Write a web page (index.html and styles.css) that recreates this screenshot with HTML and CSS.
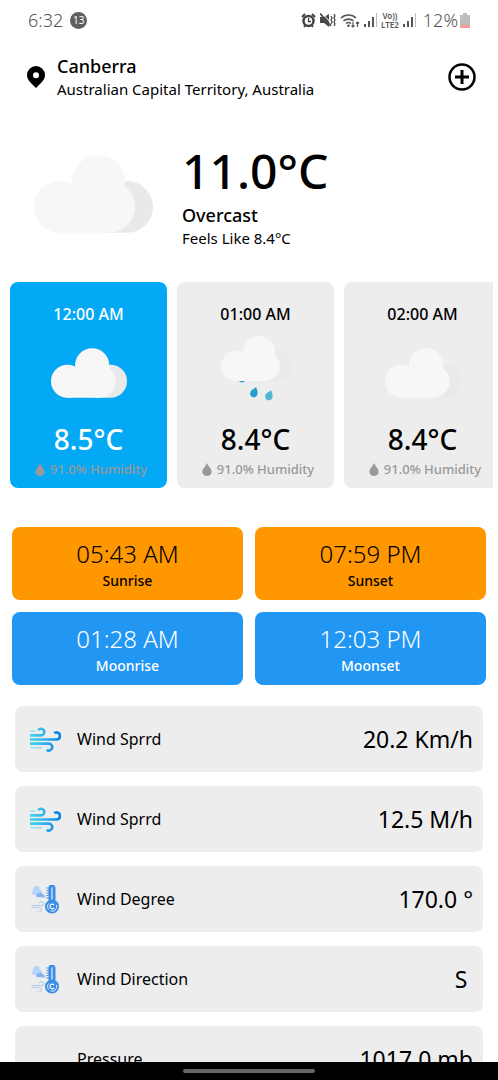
FILE: index.html
```html
<!DOCTYPE html>
<html lang="en">
<head>
<meta charset="utf-8">
<meta name="viewport" content="width=device-width, initial-scale=1">
<title>Canberra weather</title>
<link rel="stylesheet" href="styles.css">
</head>
<body>
<svg class="defs" aria-hidden="true">
  <defs>
    <linearGradient id="wind-fill" gradientUnits="userSpaceOnUse" x1="0" y1="0" x2="30" y2="0">
      <stop offset="0" stop-color="#3fd6e8"/>
      <stop offset="0.5" stop-color="#2fb0ee"/>
      <stop offset="1" stop-color="#0a78ea"/>
    </linearGradient>
    <symbol id="cloud" viewBox="0 0 120 78">
      <path class="cloud-back" d="M70 78h24a26 26 0 0 0 0-52H70z"/>
      <g class="cloud-front">
        <circle cx="26" cy="52" r="26"/>
        <circle cx="65" cy="27" r="27"/>
        <circle cx="76" cy="52" r="26"/>
        <path d="M26 34h50v44H26z"/>
      </g>
    </symbol>
    <symbol id="drop" viewBox="0 0 10 14">
      <path fill="currentColor" d="M5 0C6 3 10 6 10 9.300A5 4.700 0 0 1 0 9.300C0 6 4 3 5 0z"/>
    </symbol>
    <symbol id="wind" viewBox="0 0 30 26">
      <g fill="none" stroke="url(#wind-fill)" stroke-width="2.600">
        <path opacity="0.350" stroke-width="2" d="M0 5h5M0 21h12"/>
        <path d="M0 9h10.500a3.200 3.200 0 1 0-2.500-5"/>
        <path d="M0 13h25.500a3.400 3.400 0 1 0-2-6"/>
        <path d="M0 17h17.500a3.400 3.400 0 1 1-1.500 6"/>
      </g>
    </symbol>
    <symbol id="thermo" viewBox="0 0 28 29">
      <g fill="#b5d5f8">
        <circle cx="5" cy="4.500" r="3.500"/><circle cx="3" cy="7.500" r="2.500"/><circle cx="7" cy="7" r="3"/>
      </g>
      <path fill="#82b5f1" d="M5 12a2.500 2.500 0 0 1 1.500-3.500a3 3 0 0 1 5 1a2.500 2.500 0 0 1 2 3z"/>
      <g fill="none" stroke="#a9c9ee" stroke-width="1">
        <path d="M0 20.500h10a2 2 0 1 0-2-2M0 22.500h8a2.200 2.200 0 1 1-2 3.500"/>
      </g>
      <path stroke="#3b8ee3" stroke-width="1" d="M15 3h3M15 5.500h3M15 8h3M15 10.500h3M15 13h3"/>
      <path fill="#3b8ee3" d="M17 3a3.500 3.500 0 0 1 7 0v12.500a7 7 0 1 1-7 0z"/>
      <path stroke="#e6f1fc" stroke-width="1.200" fill="none" d="M20.500 2.500v12"/>
      <path fill="none" stroke="#dcecfb" stroke-width="1" d="M17 18.500a4.700 4.700 0 0 0 0 6M19 26a4.700 4.700 0 0 0 6-6"/>
      <path fill="none" stroke="#fff" stroke-width="1.200" d="M22.500 20a2.300 2.300 0 1 0 0 3"/>
    </symbol>
    <symbol id="signal" viewBox="0 0 13 14">
      <path fill="#555" d="M0 11h2v3H0zM4 8h2v6H4zM8 4h2v10H8z"/>
      <path fill="#bbb" d="M12 0h1v14h-1z"/>
    </symbol>
  </defs>
</svg>

<div class="app">
  <header class="status">
    <span class="clock">6:32</span>
    <span class="notice-count">13</span>
    <div class="status-icons">
      <svg width="15" height="15" viewBox="0 0 15 15" role="img" aria-label="Alarm">
        <circle cx="7.500" cy="8" r="5" fill="none" stroke="#444" stroke-width="2.500"/>
        <path fill="none" stroke="#444" stroke-width="2" d="M1 4l3-3M14 4l-3-3M3 14l1.500-2M12 14l-1.500-2"/>
        <path fill="none" stroke="#444" stroke-width="1.300" d="M7.500 5v3.500H10"/>
      </svg>
      <svg width="16" height="15" viewBox="0 0 16 15" role="img" aria-label="Vibrate">
        <path fill="#4a4a4a" d="M0 4h4L9 1v13l-5-4H0z"/>
        <path stroke="#fff" stroke-width="1" d="M2 0l9 10"/>
        <path stroke="#4a4a4a" stroke-width="1.800" d="M0 0.500l11 12.500"/>
        <path fill="none" stroke="#4a4a4a" stroke-width="1.300" d="M11 3l1 2-1 2 1 2-1 2M14 1l1 2-1 2 1 2-1 2 1 2-1 2"/>
      </svg>
      <svg width="20" height="15" viewBox="0 0 20 15" role="img" aria-label="Wi-Fi">
        <g fill="none" stroke="#555" stroke-width="1.600">
          <path d="M1 5a11 11 0 0 1 15 0M3.500 8a7.500 7.500 0 0 1 10 0M6 10.500a4 4 0 0 1 5 0"/>
        </g>
        <circle cx="8.500" cy="12.700" r="1.300" fill="#555"/>
        <path fill="none" stroke="#555" stroke-width="1.200" d="M13 9v5M11.500 12.500L13 14l1.500-1.500M17.500 14V9M16 10.500L17.500 9l1.500 1.500"/>
      </svg>
      <svg width="13" height="14"><use href="#signal"/></svg>
      <span class="network"><span>Vo))</span><span>LTE2</span></span>
      <svg width="13" height="14"><use href="#signal"/></svg>
    </div>
    <span class="percent">12%</span>
    <svg width="10" height="15" viewBox="0 0 10 15" role="img" aria-label="Battery low">
      <path fill="#bdbdbd" d="M3 0h4v2h3v13H0V2h3z"/>
      <path fill="#f4a090" d="M0 12h10v3H0z"/>
    </svg>
  </header>

  <main class="content">
    <section class="place">
      <svg class="pin" width="18" height="22" viewBox="0 0 18 22" aria-hidden="true">
        <path fill-rule="evenodd" d="M9 0a9 9 0 0 1 9 9c0 5-4 8-9 13C4 17 0 14 0 9a9 9 0 0 1 9-9zm0 6.200a3 3 0 1 0 0 6 3 3 0 0 0 0-6z"/>
      </svg>
      <div class="place-text">
        <h1 class="city">Canberra</h1>
        <p class="region">Australian Capital Territory, Australia</p>
      </div>
      <button class="add" type="button" aria-label="Add location">
        <svg width="28" height="28" viewBox="0 0 28 28" fill="none" stroke="#000">
          <circle cx="14" cy="14" r="12.500" stroke-width="2.500"/>
          <path stroke-width="3" d="M14 7v14M7 14h14"/>
        </svg>
      </button>
    </section>

    <section class="current">
      <svg class="current-icon" role="img" aria-label="Overcast"><use href="#cloud"/></svg>
      <div>
        <p class="temp">11.0°C</p>
        <p class="condition">Overcast</p>
        <p class="feels">Feels Like 8.4°C</p>
      </div>
    </section>

    <ul class="hours">
      <li class="hour hour-active">
        <span class="hour-time">12:00 AM</span>
        <div class="hour-icon"><svg class="hour-cloud"><use href="#cloud"/></svg></div>
        <span class="hour-temp">8.5°C</span>
        <span class="humidity"><svg width="10" height="13"><use href="#drop"/></svg>91.0% Humidity</span>
      </li>
      <li class="hour">
        <span class="hour-time">01:00 AM</span>
        <div class="hour-icon">
          <svg width="70" height="74" viewBox="0 0 70 74">
            <path fill="#eaeaea" d="M40 45h15a15 15 0 0 0 0-30H40z"/>
            <path fill="#2b9fc9" d="M17 44h8q-4 5-8 0z"/>
            <g fill="#f7f7f7">
              <circle cx="15" cy="30" r="15"/>
              <circle cx="38" cy="16" r="16"/>
              <circle cx="44" cy="30" r="15"/>
              <path d="M15 20h29v25H15z"/>
            </g>
            <path fill="#229fcb" d="M35 51c1 3 2 4 1.500 7a3.700 3.700 0 1 1-7-2c1-3 4-3 5.500-5z"/>
            <path fill="#55b4d4" d="M50 54c1 3 2 4 1.500 7a3.700 3.700 0 1 1-7-2c1-3 4-3 5.500-5z"/>
          </svg>
        </div>
        <span class="hour-temp">8.4°C</span>
        <span class="humidity"><svg width="10" height="13"><use href="#drop"/></svg>91.0% Humidity</span>
      </li>
      <li class="hour">
        <span class="hour-time">02:00 AM</span>
        <div class="hour-icon"><svg class="hour-cloud"><use href="#cloud"/></svg></div>
        <span class="hour-temp">8.4°C</span>
        <span class="humidity"><svg width="10" height="13"><use href="#drop"/></svg>91.0% Humidity</span>
      </li>
    </ul>

    <section class="astro">
      <div class="tile sun"><span class="tile-time">05:43 AM</span><span class="tile-name">Sunrise</span></div>
      <div class="tile sun"><span class="tile-time">07:59 PM</span><span class="tile-name">Sunset</span></div>
      <div class="tile moon"><span class="tile-time">01:28 AM</span><span class="tile-name">Moonrise</span></div>
      <div class="tile moon"><span class="tile-time">12:03 PM</span><span class="tile-name">Moonset</span></div>
    </section>

    <ul class="details">
      <li class="detail"><svg class="detail-icon"><use href="#wind"/></svg><span class="detail-name">Wind Sprrd</span><span class="detail-value">20.2 Km/h</span></li>
      <li class="detail"><svg class="detail-icon"><use href="#wind"/></svg><span class="detail-name">Wind Sprrd</span><span class="detail-value">12.5 M/h</span></li>
      <li class="detail"><svg class="detail-icon"><use href="#thermo"/></svg><span class="detail-name">Wind Degree</span><span class="detail-value">170.0 °</span></li>
      <li class="detail"><svg class="detail-icon"><use href="#thermo"/></svg><span class="detail-name">Wind Direction</span><span class="detail-value">S</span></li>
      <li class="detail"><svg class="detail-icon"></svg><span class="detail-name">Pressure</span><span class="detail-value">1017.0 mb</span></li>
    </ul>
  </main>

  <footer class="gesture"><span class="gesture-handle"></span></footer>
</div>
</body>
</html>
```

FILE: styles.css
```css
* {
  box-sizing: border-box;
}

body,
h1,
p,
ul {
  margin: 0;
  padding: 0;
}

ul {
  list-style: none;
}

body {
  background: #fff;
  color: #000;
  font-family: "Noto Sans", "Open Sans", sans-serif;
}

svg {
  display: block;
  flex: none;
}

.defs {
  position: absolute;
  width: 0;
  height: 0;
}

.app {
  display: flex;
  flex-direction: column;
  height: 100vh;
}

.content {
  flex: 1;
  min-height: 0;
  overflow: hidden;
}

.status {
  display: flex;
  align-items: center;
  flex: none;
  height: 40px;
  padding: 0 28px;
  color: #555;
}

.clock,
.percent {
  font-size: 18px;
  font-weight: 300;
  line-height: 24px;
}

.notice-count {
  width: 17px;
  height: 17px;
  margin-left: 7px;
  border-radius: 50%;
  background: #5f5f5f;
  color: #fff;
  font-size: 10px;
  line-height: 17px;
  text-align: center;
}

.status-icons {
  display: flex;
  align-items: center;
  gap: 4px;
  margin-left: auto;
  margin-right: 7px;
}

.network {
  display: flex;
  flex-direction: column;
  align-items: center;
  font-size: 8px;
  font-weight: 600;
  line-height: 9px;
}

.percent {
  margin-right: 2px;
}

.place {
  display: flex;
  align-items: center;
  padding: 14px 22px 14px 27px;
}

.place-text {
  flex: 1;
  margin-left: 12px;
}

.city {
  font-size: 18px;
  font-weight: 500;
  line-height: 24px;
}

.region {
  font-size: 15px;
  line-height: 22px;
}

.add {
  padding: 0;
  border: 0;
  background: none;
}

.current {
  display: flex;
  align-items: center;
  gap: 29px;
  padding: 25px 34px 0;
}

.current-icon {
  width: 119px;
  height: 78px;
}

.cloud-back {
  fill: #e9e9e9;
}

.cloud-front {
  fill: #f7f7f7;
}

.temp {
  font-size: 48px;
  font-weight: 500;
  line-height: 64px;
}

.condition {
  font-size: 18px;
  font-weight: 500;
  line-height: 24px;
}

.feels {
  font-size: 15px;
  line-height: 22px;
}

.hours {
  display: flex;
  gap: 10px;
  margin: 33px 5px 0 10px;
  overflow: hidden;
}

.hour {
  display: flex;
  flex: none;
  flex-direction: column;
  align-items: center;
  width: 157px;
  padding: 20px 0 9px;
  border-radius: 8px;
  background: #ededed;
}

.hour-active {
  background: #03a9f4;
  color: #fff;
}

.hour-time {
  font-size: 16px;
  font-weight: 500;
  line-height: 24px;
}

.hour-icon {
  display: flex;
  align-items: center;
  justify-content: center;
  height: 94px;
}

.hour-cloud {
  width: 76px;
  height: 50px;
}

.hour-temp {
  font-size: 28px;
  font-weight: 500;
  line-height: 39px;
}

.humidity {
  display: flex;
  align-items: center;
  gap: 5px;
  margin-left: 5px;
  color: #999;
  font-size: 13px;
  font-weight: 500;
  line-height: 20px;
}

.astro {
  display: grid;
  grid-template-columns: 1fr 1fr;
  gap: 12px;
  padding: 39px 12px 21px;
}

.tile {
  display: flex;
  flex-direction: column;
  align-items: center;
  padding: 10px 0 9px;
  border-radius: 8px;
}

.sun {
  background: #ff9800;
}

.moon {
  background: #2196f3;
  color: #fff;
}

.tile-time {
  font-size: 24px;
  font-weight: 300;
  line-height: 34px;
}

.tile-name {
  font-size: 14px;
  font-weight: 500;
  line-height: 20px;
}

.details {
  display: grid;
  gap: 14px;
  padding: 0 15px;
}

.detail {
  display: flex;
  align-items: center;
  height: 66px;
  padding: 0 10px 0 15px;
  border-radius: 8px;
  background: #ededed;
}

.detail-icon {
  width: 31px;
  height: 29px;
}

.detail-name {
  margin-left: 16px;
  font-size: 16px;
}

.detail-value {
  min-width: 24px;
  margin-left: auto;
  font-size: 23px;
  text-align: center;
}

.gesture {
  display: flex;
  align-items: center;
  justify-content: center;
  flex: none;
  height: 18px;
  background: #000;
}

.gesture-handle {
  width: 132px;
  height: 4px;
  border-radius: 2px;
  background: #666;
}
```
